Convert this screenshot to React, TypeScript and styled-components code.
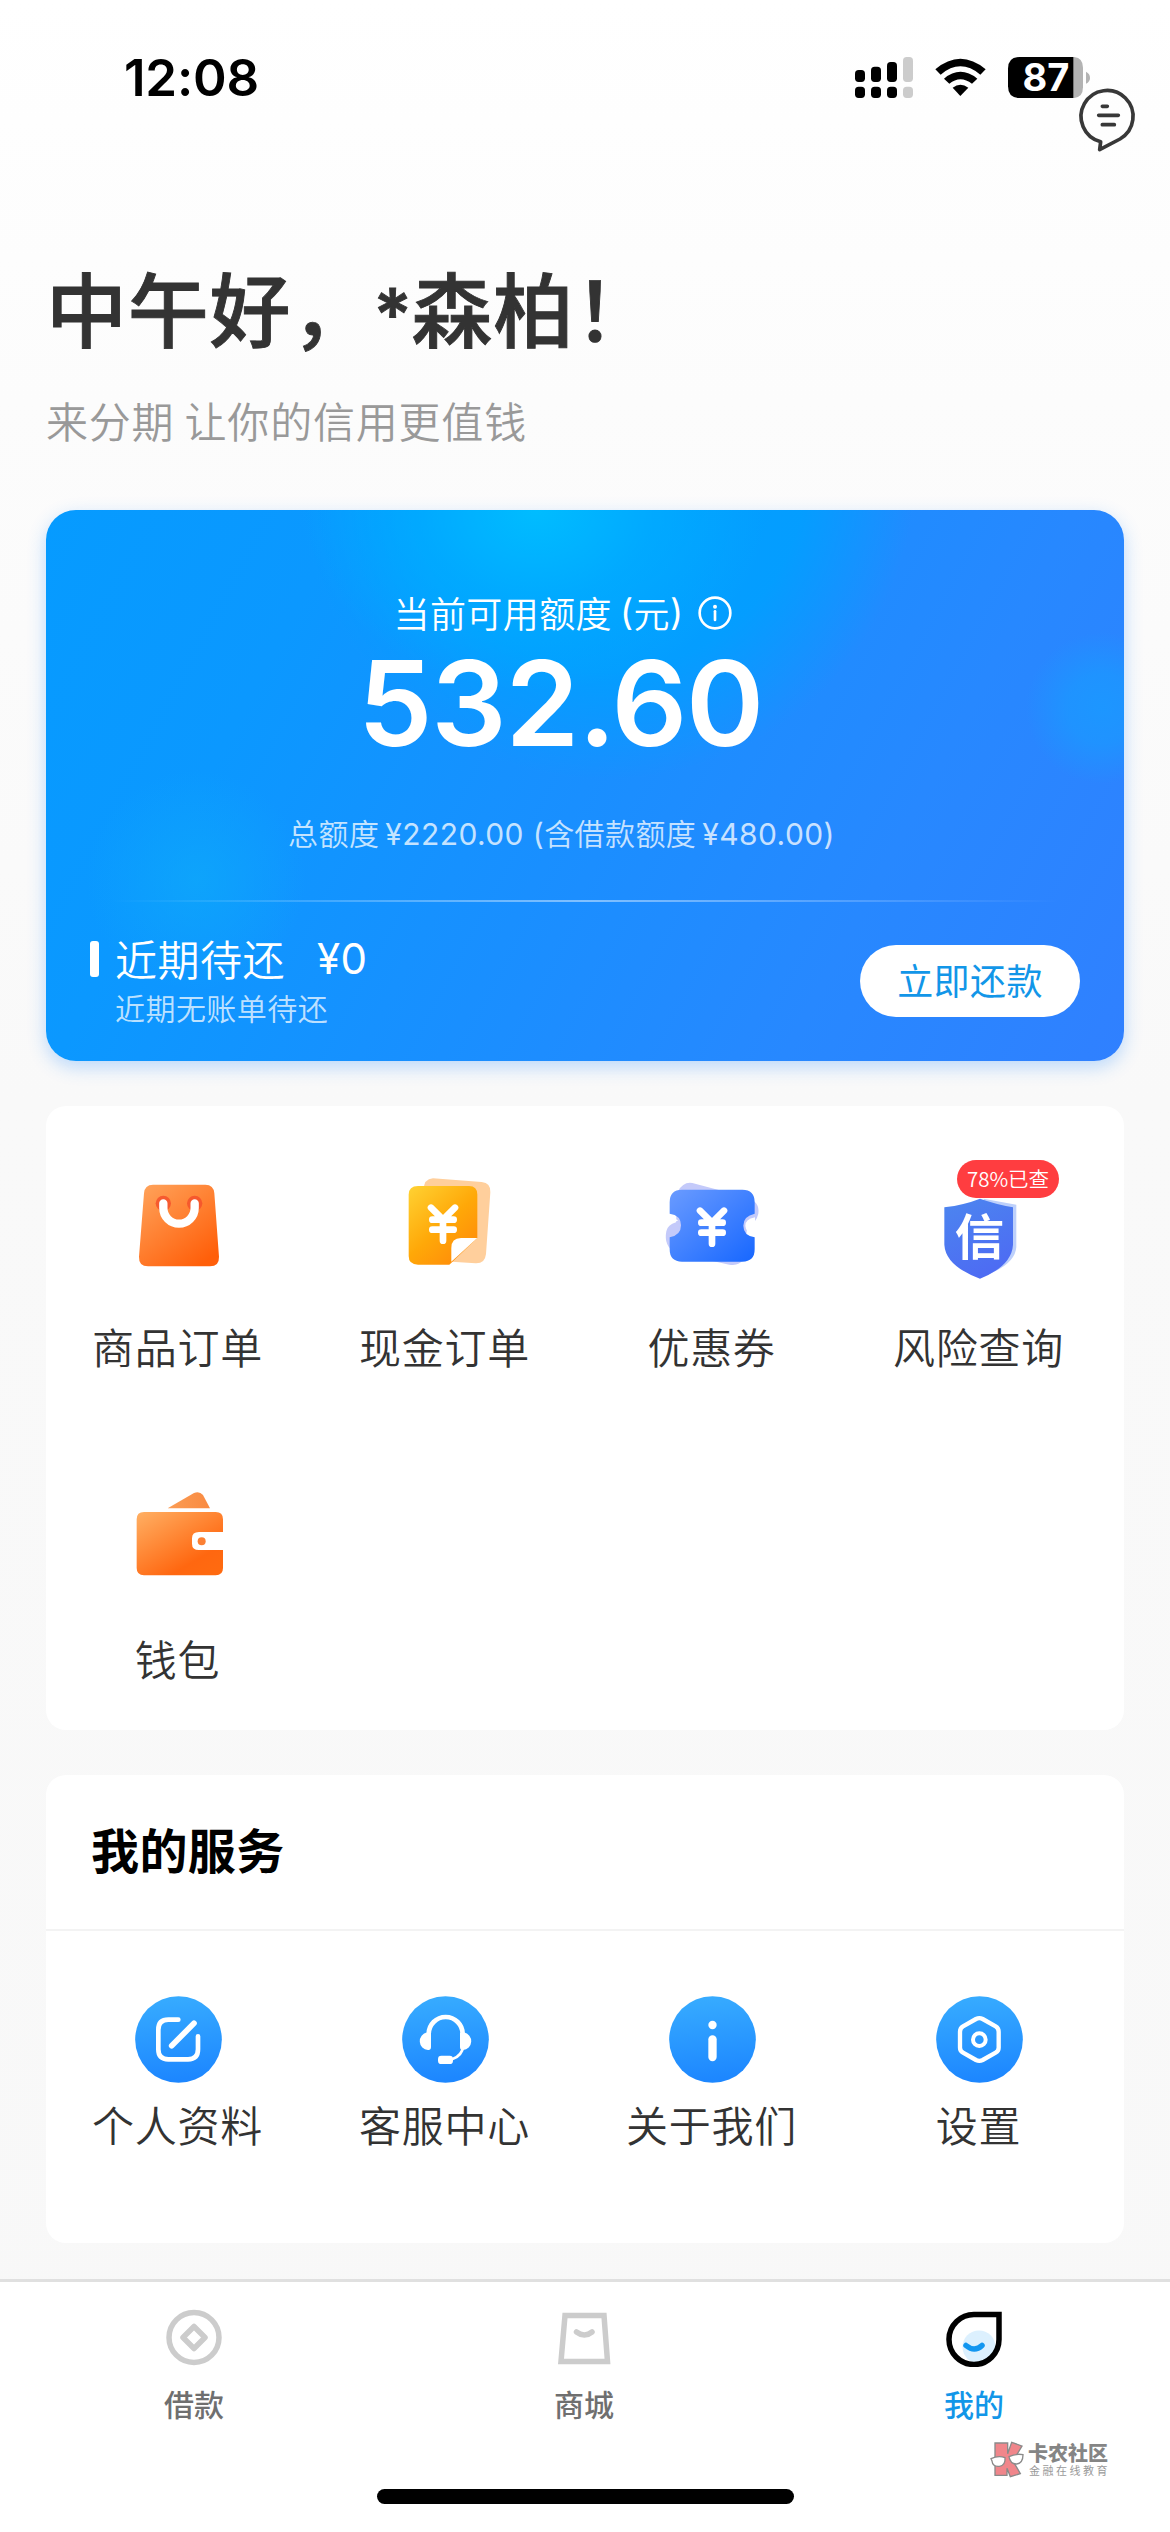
import React from 'react';
import styled, { createGlobalStyle } from 'styled-components';

const cjk = `"Noto Sans CJK SC", "Noto Sans", sans-serif`;
const latin = `Inter, "Noto Sans CJK SC", sans-serif`;

const GlobalStyle = createGlobalStyle`
  * { box-sizing: border-box; }
  body { margin: 0; background: #f9f9f9; font-family: ${cjk}; color: #333; }
  svg { display: block; }
`;

const Screen = styled.div`
  position: relative;
  width: 1170px;
  height: 2532px;
  overflow: hidden;
  display: flex;
  flex-direction: column;
  background: linear-gradient(180deg, #ffffff 0, #fefefe 120px, #fcfcfc 400px, #f9f9f9 1100px, #f8f8f8 100%);
`;

const StatusBar = styled.header`
  height: 150px;
  padding: 0 79px 0 124px;
  display: flex;
  justify-content: space-between;
  align-items: flex-start;
`;

const Clock = styled.time`
  margin-top: 48px;
  font: 600 51px/60px ${latin};
  letter-spacing: -0.2px;
  color: #000;
`;

const StatusIcons = styled.svg`
  margin-top: 50px;
  width: 240px;
  height: 55px;
`;

const ChatButton = styled.button`
  position: absolute;
  left: 1075px;
  top: 84px;
  width: 64px;
  height: 72px;
  padding: 0;
  border: 0;
  background: none;
`;

const Greeting = styled.section`
  height: 360px;
  padding: 106px 46px 0;
`;

const Title = styled.h1`
  margin: 0;
  height: 100px;
  font-size: 81px;
  line-height: 100px;
  font-weight: 500;
  letter-spacing: 0.8px;
  -webkit-text-stroke: 0.9px #333;
  color: #333;
`;

const Mask = styled.span`
  display: inline-block;
  width: 38px;
  font: 600 72px/60px ${latin};
  letter-spacing: 0;
  text-align: center;
  transform: translateY(-1px);
`;

const Subtitle = styled.p`
  margin: 34px 0 0;
  font-size: 42px;
  line-height: 60px;
  letter-spacing: 0.8px;
  font-weight: 350;
  color: #999;
`;

const CreditCard = styled.section`
  margin: 0 46px;
  width: 1078px;
  height: 551px;
  padding: 77px 44px 0;
  border-radius: 30px;
  color: #fff;
  display: flex;
  flex-direction: column;
  background:
    radial-gradient(circle at 1056px 198px, rgba(24, 156, 255, 0.75) 0, rgba(24, 156, 255, 0.6) 35px, rgba(24, 156, 255, 0) 76px),
    radial-gradient(circle at 150px 370px, rgba(14, 168, 250, 0.75) 0, rgba(14, 168, 250, 0) 110px),
    radial-gradient(ellipse 230px 180px at 490px 0, rgba(0, 190, 255, 0.95) 0, rgba(0, 178, 255, 0.55) 50%, rgba(0, 165, 255, 0) 100%),
    radial-gradient(circle at 560px -40px, rgba(0, 160, 255, 0.95) 0, rgba(0, 160, 255, 0.85) 200px, rgba(0, 160, 255, 0) 310px),
    linear-gradient(118deg, #069bff 0%, #0b98ff 22%, #198fff 50%, #2788ff 75%, #3080ff 100%);
  box-shadow: 0 6px 18px rgba(40, 140, 255, 0.3);
`;

const Quota = styled.div`
  display: flex;
  flex-direction: column;
  align-items: center;
  padding-right: 49px;
`;

const QuotaLabel = styled.div`
  display: flex;
  align-items: center;
  padding-left: 5px;
  height: 50px;
  font-size: 36px;
  line-height: 50px;
  letter-spacing: 0.4px;
  font-weight: 350;

  svg { margin: 2px 0 0 15px; }
`;

const Latin = styled.span<{ $gap?: number }>`
  font-family: ${latin};
  font-weight: 400;
  margin-left: ${(p) => p.$gap ?? 0}px;
`;

const Amount = styled.strong`
  margin-top: 16px;
  height: 100px;
  font: 600 118.5px/100px ${latin};
  letter-spacing: -1.2px;
`;

const Total = styled.p`
  margin: 55px 0 0;
  padding-left: 2px;
  height: 51px;
  font-size: 30px;
  line-height: 48px;
  letter-spacing: 0.42px;
  font-weight: 350;
  color: rgba(255, 255, 255, 0.76);
  white-space: nowrap;
`;

const CardRule = styled.div`
  flex: none;
  height: 2px;
  margin: 41px 20px 0;
  background: linear-gradient(90deg, rgba(255, 255, 255, 0), rgba(255, 255, 255, 0.45) 50%, rgba(255, 255, 255, 0));
`;

const Repay = styled.div`
  display: flex;
  justify-content: space-between;
  padding-top: 32px;
`;

const RepayLine = styled.div`
  display: flex;
  align-items: center;
  height: 50px;
  font-size: 42px;
  line-height: 46px;
  padding-bottom: 3px;
  letter-spacing: 0.5px;
  font-weight: 350;

  &::before {
    content: '';
    width: 9px;
    height: 36px;
    margin: 3px 16px 0 0;
    border-radius: 3px;
    background: #fff;
  }

  span { padding-top: 2px; }
`;

const RepayNote = styled.div`
  margin: 1px 0 0 25px;
  font-size: 30px;
  line-height: 44px;
  letter-spacing: 0.45px;
  font-weight: 350;
  color: rgba(255, 255, 255, 0.74);
`;

const RepayButton = styled.button`
  margin: 11px 0 0;
  width: 220px;
  height: 72px;
  padding: 0 0 4px;
  border: 0;
  border-radius: 36px;
  background: #fff;
  color: #1296e8;
  font: 400 36px/66px ${cjk};
  letter-spacing: 0.4px;
`;

const Panel = styled.section`
  flex: none;
  width: 1078px;
  margin: 45px 46px 0;
  border-radius: 20px;
  background: #fff;
`;

const ServicePanel = styled(Panel)`
  height: 468px;
`;

const PanelTitle = styled.h2`
  margin: 0;
  height: 156px;
  padding: 43px 45px 0;
  border-bottom: 2px solid #f3f3f3;
  font-size: 48px;
  line-height: 60px;
  font-weight: 700;
  letter-spacing: 0.4px;
  color: #000;
`;

const Grid = styled.div<{ $row: number }>`
  display: grid;
  grid-template-columns: repeat(4, 267px);
  grid-auto-rows: ${(p) => p.$row}px;
  margin-left: -1px;
`;

const Cell = styled.a<{ $top: number }>`
  position: relative;
  display: flex;
  flex-direction: column;
  align-items: center;
  padding-top: ${(p) => p.$top}px;
`;

const CellLabel = styled.span<{ $gap: number }>`
  margin-top: ${(p) => p.$gap}px;
  padding-right: 2px;
  font-size: 42px;
  line-height: 60px;
  letter-spacing: 0.7px;
  font-weight: 350;
  color: #333;
`;

const Badge = styled.span`
  position: absolute;
  left: 111px;
  top: 54px;
  width: 102px;
  height: 38px;
  border-radius: 19px;
  background: #ff3d40;
  color: #fff;
  font-size: 20.5px;
  line-height: 36px;
  text-align: center;
  font-weight: 350;
`;

const TabBar = styled.nav`
  flex: none;
  height: 160px;
  margin-top: 36px;
  border-top: 3px solid #e0e0e0;
  background: #fff;
  display: grid;
  grid-template-columns: repeat(3, 390px);
`;

const Tab = styled.a<{ $active?: boolean }>`
  display: flex;
  flex-direction: column;
  align-items: center;
  padding: 25px 2px 0 0;
  font-size: 30px;
  line-height: 40px;
  font-weight: 500;
  color: ${(p) => (p.$active ? '#1296e8' : '#6f6f6f')};

  svg { margin-bottom: 16px; }
`;

const Footer = styled.footer`
  flex: 1;
  padding-top: 2px;
  background: #fff;
  display: flex;
  flex-direction: column;
  align-items: center;
`;

const Watermark = styled.div`
  align-self: flex-end;
  display: flex;
  gap: 3px;
  margin-right: 60px;
  height: 40px;
`;

const WatermarkText = styled.div`
  display: flex;
  flex-direction: column;
  padding-top: 1px;
  color: #858585;

  b { font-size: 20px; line-height: 22px; font-weight: 900; white-space: nowrap; }
  small { font-size: 11px; line-height: 12px; letter-spacing: 2.5px; padding-left: 1px; color: #9a9a9a; white-space: nowrap; }
`;

const HomeIndicator = styled.div`
  width: 417px;
  height: 15px;
  margin-top: 8px;
  border-radius: 8px;
  background: #000;
`;

const BagIcon = () => (
  <svg width="120" height="120" viewBox="87 78 360 360">
    <defs>
      <linearGradient id="bag" x1="0" y1="0" x2="0.75" y2="1">
        <stop offset="0" stopColor="#ffa45c" />
        <stop offset="1" stopColor="#ff5f0a" />
      </linearGradient>
    </defs>
    <path d="M189 134H346Q371 134 373 160L387 350Q388 379 360 379H174Q146 379 147 350L162 160Q164 134 189 134Z" fill="url(#bag)" />
    <circle cx="220" cy="190" r="23" fill="#f4512c" opacity="0.85" />
    <circle cx="314" cy="190" r="23" fill="#f4512c" opacity="0.85" />
    <path d="M220 190V204A47 47 0 0 0 314 204V190" fill="none" stroke="#fff" strokeWidth="25" strokeLinecap="round" />
  </svg>
);

const Yen = ({ x, y }: { x: number; y: number }) => (
  <g transform={`translate(${x} ${y})`} fill="none" stroke="#fff" strokeWidth="20" strokeLinecap="round" strokeLinejoin="round">
    <path d="M-36 -48L0 -12L36 -48M-32 -12H32M-32 18H32M0 -10V51" />
  </g>
);

const CashIcon = () => (
  <svg width="120" height="120" viewBox="887 78 360 360">
    <defs>
      <linearGradient id="cash" x1="0" y1="0" x2="0.8" y2="1">
        <stop offset="0" stopColor="#ffd233" />
        <stop offset="0.55" stopColor="#ffa808" />
        <stop offset="1" stopColor="#ff8a0a" />
      </linearGradient>
    </defs>
    <path d="M1028 115L1174 126Q1202 129 1200 157L1187 342Q1184 371 1156 370L1000 360V150Q1000 117 1028 115Z" fill="#ffcf9c" />
    <path d="M983 138H1136Q1161 138 1161 164V294L1077 374H983Q955 374 955 348V164Q955 138 983 138Z" fill="url(#cash)" />
    <path d="M1161 294H1112Q1083 294 1083 324V365Z" fill="#fff" />
    <Yen x={1058} y={251} />
  </svg>
);

const CouponIcon = () => (
  <svg width="120" height="120" viewBox="97 78 360 360">
    <defs>
      <linearGradient id="coupon" x1="0" y1="0" x2="1" y2="1">
        <stop offset="0" stopColor="#6a9bff" />
        <stop offset="1" stopColor="#1767ff" />
      </linearGradient>
    </defs>
    <path d="M172 154Q188 124 215 129L376 172Q418 184 413 221Q406 252 380 258L368 358Q355 379 326 374L166 338Q128 320 137 274Q141 254 166 247Z" fill="#c4cafa" />
    <path d="M184 149H365Q402 149 402 187V221Q368 228 368 257T402 292V328Q402 365 365 365H184Q147 365 147 328V292Q181 286 181 256T147 221V187Q147 149 184 149Z" fill="url(#coupon)" />
    <path d="M403 232Q374 238 374 257T403 283Z" fill="#fff" />
    <path d="M146 232Q166 236 172 242Q160 246 146 250Z" fill="#fff" />
    <Yen x={274} y={260} />
  </svg>
);

const ShieldIcon = () => (
  <svg width="120" height="120" viewBox="899 78 360 360">
    <defs>
      <linearGradient id="shield" x1="0" y1="0" x2="0.4" y2="1">
        <stop offset="0" stopColor="#4c86ef" />
        <stop offset="1" stopColor="#4d6cf3" />
      </linearGradient>
    </defs>
    <path d="M1090 176L1188 194V320Q1186 370 1100 405Z" fill="#bdd0fb" />
    <path d="M1079 176Q1124 192 1178 202V314Q1174 378 1079 416Q976 378 972 314V202Q1034 194 1079 176Z" fill="url(#shield)" />
    <text x="1077" y="344" textAnchor="middle" fontSize="148" fontWeight="700" fontFamily="Noto Sans CJK SC" fill="#fff">信</text>
  </svg>
);

const WalletIcon = () => (
  <svg width="120" height="120" viewBox="177 54 360 360">
    <defs>
      <linearGradient id="wallet" x1="0" y1="0" x2="0.8" y2="1">
        <stop offset="0" stopColor="#ffb064" />
        <stop offset="0.8" stopColor="#ff6710" />
        <stop offset="1" stopColor="#ff6a10" />
      </linearGradient>
      <linearGradient id="note" x1="0" y1="0" x2="1" y2="0">
        <stop offset="0" stopColor="#fb9d55" />
        <stop offset="1" stopColor="#f98a41" />
      </linearGradient>
    </defs>
    <path d="M323 145L402 99Q418 92 429 105L450 145Z" fill="url(#note)" />
    <path d="M252 156H467Q489 156 489 178V216H417Q396 216 396 235V251Q396 270 417 270H489V324Q489 346 467 346H252Q230 346 230 324V178Q230 156 252 156Z" fill="url(#wallet)" />
    <circle cx="425" cy="244" r="12" fill="#fb8034" />
  </svg>
);

const Disc = ({ id, children }: { id: string; children: React.ReactNode }) => (
  <svg width="87" height="87" viewBox="0 0 261 261">
    <defs>
      <linearGradient id={id} x1="0" y1="0" x2="0.1" y2="1">
        <stop offset="0" stopColor="#38adff" />
        <stop offset="1" stopColor="#1d87ff" />
      </linearGradient>
    </defs>
    <circle cx="130.500" cy="130.500" r="130" fill={`url(#${id})`} />
    <g fill="none" stroke="#fff" strokeLinecap="round" strokeLinejoin="round">{children}</g>
  </svg>
);

const ProfileIcon = () => (
  <Disc id="profile">
    <path d="M130 71H100Q70 71 70 101V160Q70 190 100 190H159Q189 190 189 160V121" strokeWidth="14" />
    <path d="M110 149L177 82" strokeWidth="17" />
  </Disc>
);

const HeadsetIcon = () => (
  <Disc id="headset">
    <path d="M80 118V114A51 51 0 0 1 182 114V118" strokeWidth="14" />
    <path d="M87 111V153Q87 163 78 162A26.500 26.500 0 0 1 75 109.500ZM174 111V153Q174 163 183 162A26.500 26.500 0 0 0 186 109.500Z" fill="#fff" stroke="none" />
    <path d="M184 150Q180 180 150 190" strokeWidth="8" />
    <rect x="108" y="179" width="45" height="25" rx="10" fill="#fff" stroke="none" />
  </Disc>
);

const AboutIcon = () => (
  <Disc id="about">
    <circle cx="130.500" cy="87" r="12.500" fill="#fff" stroke="none" />
    <path d="M130.500 130V183" strokeWidth="25" />
  </Disc>
);

const SettingsIcon = () => (
  <Disc id="settings">
    <path d="M120 69Q130 64 140 69L179 91Q188 96 188 107V155Q188 165 179 170L140 192Q130 197 120 192L81 170Q72 165 72 155V107Q72 96 81 91Z" strokeWidth="13" />
    <circle cx="130" cy="131" r="19" strokeWidth="12" />
  </Disc>
);

const menu = [
  { label: '商品订单', Icon: BagIcon },
  { label: '现金订单', Icon: CashIcon },
  { label: '优惠券', Icon: CouponIcon },
  { label: '风险查询', Icon: ShieldIcon, badge: '78%已查' },
  { label: '钱包', Icon: WalletIcon },
];

const services = [
  { label: '个人资料', Icon: ProfileIcon },
  { label: '客服中心', Icon: HeadsetIcon },
  { label: '关于我们', Icon: AboutIcon },
  { label: '设置', Icon: SettingsIcon },
];

export default function App() {
  return (
    <>
      <GlobalStyle />
      <Screen>
        <StatusBar>
          <Clock>12:08</Clock>
          <StatusIcons viewBox="96 60 720 165">
            <g>
              <rect x="108" y="120" width="30" height="36" rx="11" />
              <rect x="156" y="110" width="30" height="46" rx="11" />
              <rect x="204" y="96" width="30" height="60" rx="11" />
              <rect x="252" y="81" width="30" height="75" rx="11" fill="#ccc" />
              <rect x="108" y="170" width="30" height="34" rx="11" />
              <rect x="156" y="170" width="30" height="34" rx="11" />
              <rect x="204" y="170" width="30" height="34" rx="11" />
              <rect x="252" y="170" width="30" height="34" rx="11" fill="#ccc" />
            </g>
            <g>
              <path d="M349 118Q424 55 500 118L484 134Q424 84 365 134Z" />
              <path d="M375 146Q424 105 475 146L459 161Q424 134 391 161Z" />
              <path d="M401 173Q424 155 448 173L424 198Z" />
            </g>
            <path d="M762 81H766Q792 84 792 113V172Q792 201 766 204H762Z" fill="#b3b3b3" />
            <path d="M602 81H763V204H602Q567 204 567 169V116Q567 81 602 81Z" />
            <path d="M801 125Q813 131 813 143T801 161Z" fill="#b3b3b3" />
            <text x="681" y="184" textAnchor="middle" fontSize="114" fontWeight="700" fontFamily="Inter" fill="#fff">87</text>
          </StatusIcons>
        </StatusBar>
        <ChatButton aria-label="消息">
          <svg width="64" height="72" viewBox="765 162 192 216" fill="none" stroke="#383838" strokeWidth="11" strokeLinecap="round" strokeLinejoin="round">
            <path d="M842 335A78 78 0 1 1 900 327L839 359Z" />
            <path d="M847 229H862M836 256H895M847 284H883" />
          </svg>
        </ChatButton>

        <Greeting>
          <Title>中午好，<Mask>*</Mask>森柏！</Title>
          <Subtitle>来分期 让你的信用更值钱</Subtitle>
        </Greeting>

        <CreditCard>
          <Quota>
            <QuotaLabel>
              当前可用额度<Latin $gap={8}>(</Latin>元<Latin>)</Latin>
              <svg width="34" height="34" viewBox="0 0 102 102" fill="none" stroke="#fff">
                <circle cx="51" cy="51" r="46" strokeWidth="8" />
                <path d="M51 46V72" strokeWidth="8" strokeLinecap="round" />
                <circle cx="51" cy="32" r="6" fill="#fff" stroke="none" />
              </svg>
            </QuotaLabel>
            <Amount>532.60</Amount>
            <Total>
              总额度<Latin $gap={6}>¥2220.00 (</Latin>含借款额度<Latin $gap={6}>¥480.00)</Latin>
            </Total>
          </Quota>
          <CardRule />
          <Repay>
            <div>
              <RepayLine>近期待还<Latin $gap={32}>¥0</Latin></RepayLine>
              <RepayNote>近期无账单待还</RepayNote>
            </div>
            <RepayButton>立即还款</RepayButton>
          </Repay>
        </CreditCard>

        <Panel>
          <Grid $row={312}>
            {menu.map(({ label, Icon, badge }) => (
              <Cell key={label} $top={60}>
                <Icon />
                {badge && <Badge>{badge}</Badge>}
                <CellLabel $gap={30}>{label}</CellLabel>
              </Cell>
            ))}
          </Grid>
        </Panel>

        <ServicePanel>
          <PanelTitle>我的服务</PanelTitle>
          <Grid $row={310}>
            {services.map(({ label, Icon }) => (
              <Cell key={label} $top={65}>
                <Icon />
                <CellLabel $gap={11}>{label}</CellLabel>
              </Cell>
            ))}
          </Grid>
        </ServicePanel>

        <TabBar>
          <Tab>
            <svg width="60" height="60" viewBox="0 0 60 60" fill="none" stroke="#ccc" strokeWidth="5.500">
              <circle cx="30" cy="30.500" r="25" />
              <path d="M30 19.500L41 30.500L30 41.500L19 30.500Z" strokeLinejoin="round" />
            </svg>
            借款
          </Tab>
          <Tab>
            <svg width="60" height="60" viewBox="0 0 60 60" fill="none" stroke="#ccc" strokeWidth="5.500">
              <path d="M11 8.500H50L53.500 54.500H7Z" />
              <path d="M22.500 25Q30.500 31 38 25" strokeLinecap="round" />
            </svg>
            商城
          </Tab>
          <Tab $active>
            <svg width="60" height="60" viewBox="0 0 60 60" fill="none">
              <circle cx="35" cy="40" r="16.500" fill="#dcf0fe" />
              <path d="M55 7.500H30.500A25 25 0 1 0 55 32.500Z" stroke="#000" strokeWidth="5.500" />
              <path d="M22 38.500Q30.500 45.500 38 38.500" stroke="#1296f0" strokeWidth="5.500" strokeLinecap="round" />
            </svg>
            我的
          </Tab>
        </TabBar>

        <Footer>
          <Watermark>
            <svg width="36" height="38" viewBox="208 463 108 112">
              <g fill="#f0868b" stroke="#8a8a8a" strokeWidth="4">
                <path d="M226 468H264V500L276 466L307 477L280 522L302 560L272 569L262 544V565H226Z" />
              </g>
              <g fill="#fff" stroke="#8a8a8a" strokeWidth="4">
                <path d="M214 515Q236 505 256 512Q258 536 239 538Q219 540 217 522Z" />
                <path d="M268 509Q288 499 310 503Q310 528 291 531Q272 532 268 509Z" />
              </g>
            </svg>
            <WatermarkText>
              <b>卡农社区</b>
              <small>金融在线教育</small>
            </WatermarkText>
          </Watermark>
          <HomeIndicator />
        </Footer>
      </Screen>
    </>
  );
}
